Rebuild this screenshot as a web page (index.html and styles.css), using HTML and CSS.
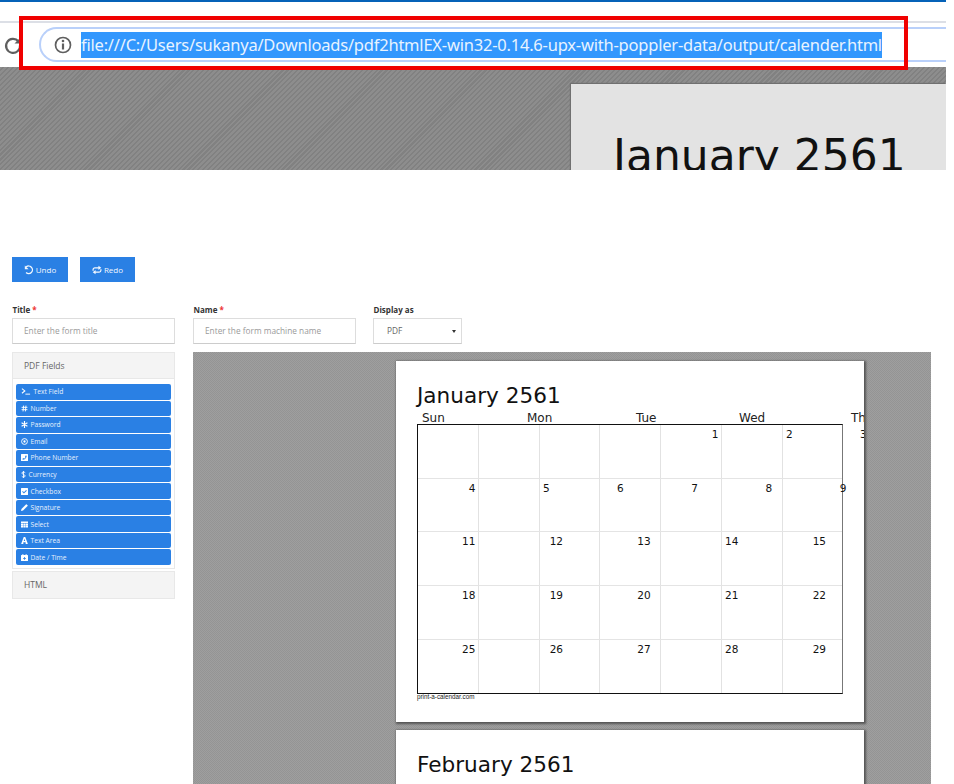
FILE: index.html
```html
<!DOCTYPE html>
<html lang="en">
<head>
<meta charset="utf-8">
<title>Form builder</title>
<link rel="stylesheet" href="styles.css">
</head>
<body>
<svg class="defs" width="0" height="0" aria-hidden="true">
  <symbol id="i-term" viewBox="0 0 16 12"><path d="M1 1l5 4-5 4" fill="none" stroke="currentColor" stroke-width="1.8"/><path d="M7 10.5h8" stroke="currentColor" stroke-width="1.6"/></symbol>
  <symbol id="i-hash" viewBox="0 0 12 12"><path d="M4.5 1L3.5 11M8.5 1L7.5 11M1 4h10M1 8h10" fill="none" stroke="currentColor" stroke-width="1.6"/></symbol>
  <symbol id="i-star" viewBox="0 0 12 12"><path d="M6 0v12M1 3l10 6M11 3L1 9" fill="none" stroke="currentColor" stroke-width="2"/></symbol>
  <symbol id="i-at" viewBox="0 0 12 12"><circle cx="6" cy="6" r="5" fill="none" stroke="currentColor" stroke-width="1.6"/><circle cx="6" cy="6" r="2" fill="currentColor"/></symbol>
  <symbol id="i-phone" viewBox="0 0 12 12"><path fill-rule="evenodd" fill="currentColor" d="M1 0h10a1 1 0 0 1 1 1v10a1 1 0 0 1-1 1H1a1 1 0 0 1-1-1V1a1 1 0 0 1 1-1zM8 2.500L9.800 3c0 3.500-3 6.800-6.800 6.800L2.500 8 4.500 7l.8 1c1-.5 2-1.500 2.500-2.700l-1-.8z"/></symbol>
  <symbol id="i-dollar" viewBox="0 0 8 12"><path d="M7 3C6.500 1.800 1 1.300 1 3.500S7 6 7 8.500 1.500 10.500 1 9M4 0v12" fill="none" stroke="currentColor" stroke-width="1.500"/></symbol>
  <symbol id="i-check" viewBox="0 0 12 12"><path fill-rule="evenodd" fill="currentColor" d="M1 0h10a1 1 0 0 1 1 1v10a1 1 0 0 1-1 1H1a1 1 0 0 1-1-1V1a1 1 0 0 1 1-1zM5 9.500l5-5L8.800 3.300 5 7.100 3.200 5.300 2 6.500z"/></symbol>
  <symbol id="i-pencil" viewBox="0 0 12 12"><path fill="currentColor" d="M0 12l.8-3.500L8.500.8a1 1 0 0 1 1.400 0l1.300 1.300a1 1 0 0 1 0 1.400L3.500 11.200z"/></symbol>
  <symbol id="i-table" viewBox="0 0 12 10"><path fill="currentColor" d="M0 0h12v2.500H0zM0 3.300h3.600v2.800H0zM4.200 3.300h3.600v2.800H4.200zM8.400 3.300H12v2.800H8.400zM0 6.900h3.600V10H0zM4.200 6.900h3.600V10H4.200zM8.400 6.900H12V10H8.400z"/></symbol>
  <symbol id="i-font" viewBox="0 0 12 12"><path fill-rule="evenodd" fill="currentColor" d="M4.700 0h2.600L11.500 11v1H7.800v-1l.6-.3-.6-1.900H4.200l-.6 1.900.6.300v1H.5v-1zM6 3.200L4.800 7h2.400z"/></symbol>
  <symbol id="i-cal" viewBox="0 0 12 12"><path fill-rule="evenodd" fill="currentColor" d="M2.500 0h1.500v1.500h4V0h1.500v1.500H11a1 1 0 0 1 1 1V11a1 1 0 0 1-1 1H1a1 1 0 0 1-1-1V2.500a1 1 0 0 1 1-1h1.500zM5.300 5v1.700H3.500v1.400h1.800v1.700h1.400V8.100h1.800V6.700H6.700V5z"/></symbol>
</svg>

<section class="browser">
  <div class="toolbar">
    <svg class="reload" viewBox="0 0 20 20"><path d="M15.500 6.500A7 7 0 1 0 17 10" fill="none" stroke="#5f5f5f" stroke-width="2.200"/><path d="M17.500 2.500v6h-6z" fill="#5f5f5f"/></svg>
    <div class="omnibox">
      <svg class="info" viewBox="0 0 18 18"><circle cx="9" cy="9" r="7.500" fill="none" stroke="#5f5f5f" stroke-width="1.700"/><path d="M9 7.500v6" stroke="#5f5f5f" stroke-width="2.200"/><circle cx="9" cy="5" r="1.300" fill="#5f5f5f"/></svg>
      <span class="url">file:///C:/Users/sukanya/Downloads/pdf2htmlEX-win32-0.14.6-upx-with-poppler-data/output/calender.html</span>
    </div>
  </div>
  <div class="viewer">
    <div class="viewer-page"><div class="viewer-title">January 2561</div></div>
  </div>
  <div class="highlight"></div>
</section>

<section class="builder">
  <div class="actions">
    <button class="btn btn-undo" type="button"><svg class="btn-icon" viewBox="0 0 12 12"><path d="M2.500 2.500A4.500 4.500 0 1 1 2.500 9" fill="none" stroke="currentColor" stroke-width="1.600"/><path d="M1 0.500v4.500h4.500z" fill="currentColor"/></svg>Undo</button>
    <button class="btn btn-redo" type="button"><svg class="btn-icon" viewBox="0 0 14 12"><path d="M1.500 7V5.500a2.500 2.500 0 0 1 2.500-2.500h6M12.500 5v1.500A2.500 2.500 0 0 1 10 9H4" fill="none" stroke="currentColor" stroke-width="1.700"/><path d="M9 0l4 3-4 3zM5 6L1 9l4 3z" fill="currentColor"/></svg>Redo</button>
  </div>

  <div class="form-row">
    <div class="field field-wide">
      <label class="label">Title <span class="req">*</span></label>
      <div class="control placeholder">Enter the form title</div>
    </div>
    <div class="field field-wide">
      <label class="label">Name <span class="req">*</span></label>
      <div class="control placeholder">Enter the form machine name</div>
    </div>
    <div class="field field-select">
      <label class="label">Display as</label>
      <div class="control select"><span>PDF</span><span class="caret"></span></div>
    </div>
  </div>

  <div class="workspace">
    <aside class="sidebar">
      <div class="panel">
        <div class="panel-head">PDF Fields</div>
        <ul class="items">
          <li class="item"><svg class="ico ico-term"><use href="#i-term"/></svg>Text Field</li>
          <li class="item"><svg class="ico"><use href="#i-hash"/></svg>Number</li>
          <li class="item"><svg class="ico"><use href="#i-star"/></svg>Password</li>
          <li class="item"><svg class="ico"><use href="#i-at"/></svg>Email</li>
          <li class="item"><svg class="ico"><use href="#i-phone"/></svg>Phone Number</li>
          <li class="item"><svg class="ico ico-dollar"><use href="#i-dollar"/></svg>Currency</li>
          <li class="item"><svg class="ico"><use href="#i-check"/></svg>Checkbox</li>
          <li class="item"><svg class="ico"><use href="#i-pencil"/></svg>Signature</li>
          <li class="item"><svg class="ico"><use href="#i-table"/></svg>Select</li>
          <li class="item"><svg class="ico"><use href="#i-font"/></svg>Text Area</li>
          <li class="item"><svg class="ico"><use href="#i-cal"/></svg>Date / Time</li>
        </ul>
      </div>
      <div class="panel"><div class="panel-head panel-solo">HTML</div></div>
    </aside>

    <main class="canvas">
      <article class="page">
        <h2 class="month">January 2561</h2>
        <div class="weekdays"><span>Sun</span><span>Mon</span><span>Tue</span><span>Wed</span><span>Thu</span></div>
        <div class="grid">
          <div class="week week-a start-1"><span>1</span><span>2</span><span>3</span></div>
          <div class="week week-a start-4"><span>4</span><span>5</span><span>6</span><span>7</span><span>8</span><span>9</span></div>
          <div class="week week-b"><span>11</span><span>12</span><span>13</span><span>14</span><span>15</span></div>
          <div class="week week-b"><span>18</span><span>19</span><span>20</span><span>21</span><span>22</span></div>
          <div class="week week-b"><span>25</span><span>26</span><span>27</span><span>28</span><span>29</span></div>
        </div>
        <div class="credit">print-a-calendar.com</div>
      </article>
      <article class="page">
        <h2 class="month">February 2561</h2>
      </article>
    </main>
  </div>
</section>
</body>
</html>
```
FILE: styles.css
```css
* { box-sizing: border-box; }
html, body { margin: 0; padding: 0; }
body {
  width: 954px;
  height: 784px;
  overflow: hidden;
  background: #fff;
  font-family: "Open Sans", "Liberation Sans", sans-serif;
  color: #333;
}
.defs { position: absolute; }

/* Browser screenshot */
.browser {
  position: relative;
  width: 946px;
  height: 170px;
  border-top: 2px solid #0562b8;
  overflow: hidden;
}
.toolbar {
  height: 65px;
  padding-top: 19px;
  display: flex;
  flex-direction: column;
  position: relative;
}
.toolbar::before {
  content: "";
  height: 2px;
  background: #dcdfe6;
}
.reload {
  position: absolute;
  left: 3px;
  top: 33px;
  width: 20px;
  height: 20px;
}
.omnibox {
  margin: 4px 0 0 39px;
  height: 35px;
  border: 2.500px solid #b9d0fa;
  border-right: 0;
  border-radius: 18px 0 0 18px;
  display: flex;
  align-items: center;
  padding-left: 13px;
}
.info { width: 18px; height: 18px; flex: none; }
.url {
  margin-left: 9px;
  height: 26px;
  line-height: 25px;
  background: #3297fd;
  color: #e8f3ff;
  font-family: "Noto Sans", sans-serif;
  font-size: 16.500px;
  white-space: nowrap;
  letter-spacing: -0.21px;
}
.viewer {
  height: 103px;
  padding: 17px 0 0 571px;
  background: repeating-linear-gradient(135deg, #8d8d8d 0 2px, #818181 2px 3.500px);
}
.viewer-page {
  height: 100px;
  background: #e3e3e3;
  padding: 46px 0 0 42px;
  box-shadow: -1px -1px 1px #707070;
}
.viewer-title {
  font-family: "DejaVu Sans", sans-serif;
  font-size: 44px;
  line-height: 52px;
  color: #111;
  white-space: nowrap;
}
.highlight {
  position: absolute;
  left: 19px;
  top: 14px;
  width: 889px;
  height: 54px;
  border: 4.500px solid #f00000;
}

/* Builder */
.builder {
  padding: 87px 23px 0 12px;
}
.actions { display: flex; gap: 12px; }
.btn {
  height: 25px;
  padding: 0;
  border: 0;
  background: #2a80e4;
  color: #f2f7fe;
  font-family: inherit;
  font-size: 8px;
  display: flex;
  align-items: center;
  justify-content: center;
  gap: 2px;
}
.btn-undo { width: 56px; }
.btn-redo { width: 55px; }
.btn-icon { width: 10px; height: 10px; }

.form-row {
  display: grid;
  grid-template-columns: 181px 180px 89px;
  margin-top: 22px;
}
.field-wide { width: 163px; }
.field-select { width: 89px; }
.label {
  display: block;
  height: 14px;
  padding-left: 0.500px;
  font-size: 8px;
  line-height: 11px;
  font-weight: 700;
  color: #333;
}
.req { color: #e33; }
.control {
  height: 26px;
  border: 1px solid #ddd;
  border-bottom-color: #ccc;
  background: #fff;
  font-size: 8.300px;
  line-height: 24px;
  padding-left: 11px;
}
.placeholder { color: #9a9a9a; }
.select {
  display: flex;
  justify-content: space-between;
  align-items: center;
  padding: 0 5px 0 13px;
  color: #666;
}
.caret {
  width: 0;
  height: 0;
  border: 2px solid transparent;
  border-top: 3px solid #333;
  border-bottom: 0;
}

.workspace { display: flex; gap: 18px; margin-top: 8px; }
.sidebar { width: 163px; flex: none; display: flex; flex-direction: column; gap: 2px; }
.panel { border: 1px solid #e8e8e8; }
.panel-head {
  height: 26px;
  background: #f4f4f4;
  border-bottom: 1px solid #e8e8e8;
  font-size: 8.500px;
  line-height: 26px;
  padding-left: 11px;
  color: #666;
}
.panel-solo { border-bottom: 0; }
.items {
  list-style: none;
  margin: 0;
  padding: 5px 3px 3px;
  display: flex;
  flex-direction: column;
  gap: 1px;
}
.item {
  height: 15.550px;
  background: #2a80e4;
  border-radius: 2px;
  color: #e6f0fc;
  font-size: 6.700px;
  line-height: 15px;
  padding-left: 5px;
  display: flex;
  align-items: center;
  gap: 2.500px;
  white-space: nowrap;
}
.ico { width: 7px; height: 7px; flex: none; color: #fff; }
.ico-term { width: 10px; }
.ico-dollar { width: 5px; }

.canvas {
  width: 738px;
  height: 432px;
  overflow: hidden;
  padding: 9px 0 0 203px;
  display: flex;
  flex-direction: column;
  gap: 8px;
  background: repeating-conic-gradient(#949494 0 25%, #9f9f9f 0 50%) 0 0 / 2px 2px;
}
.page {
  width: 468px;
  height: 361px;
  flex: none;
  background: #fff;
  padding: 19px 0 0 21px;
  box-shadow: 1px 1px 2px 1px #555;
  overflow: hidden;
}
.month {
  margin: 0 0 1px;
  font-family: "DejaVu Sans", sans-serif;
  font-weight: 400;
  font-size: 21.600px;
  line-height: 31px;
  color: #111;
  white-space: nowrap;
}
.weekdays {
  display: grid;
  grid-template-columns: 105px 109px 103px 112px 40px;
  height: 12px;
  padding-left: 5px;
  font-family: "DejaVu Sans", sans-serif;
  font-size: 12px;
  line-height: 13px;
  color: #222;
  white-space: nowrap;
}
.grid {
  width: 426px;
  height: 270px;
  border: 1px solid #111;
  border-right-color: #777;
  background: repeating-linear-gradient(90deg, transparent 0 59.750px, #e2e2e2 59.750px 60.750px);
}
.week {
  height: 53.700px;
  border-bottom: 1px solid #e4e4e4;
  display: flex;
  padding-top: 2px;
  font-family: "DejaVu Sans", sans-serif;
  font-size: 10.500px;
  line-height: 14px;
  color: #111;
}
.week:last-child { border-bottom: 0; }
.week span { flex: none; }
.week-a { gap: 67.500px; }
.week-b { gap: 74.300px; padding-left: 44px; }
.start-1 { padding-left: 293.700px; }
.start-4 { padding-left: 50.700px; }
.credit {
  font-family: "Liberation Sans", sans-serif;
  font-size: 6.300px;
  line-height: 6px;
  color: #222;
  white-space: nowrap;
}
```
